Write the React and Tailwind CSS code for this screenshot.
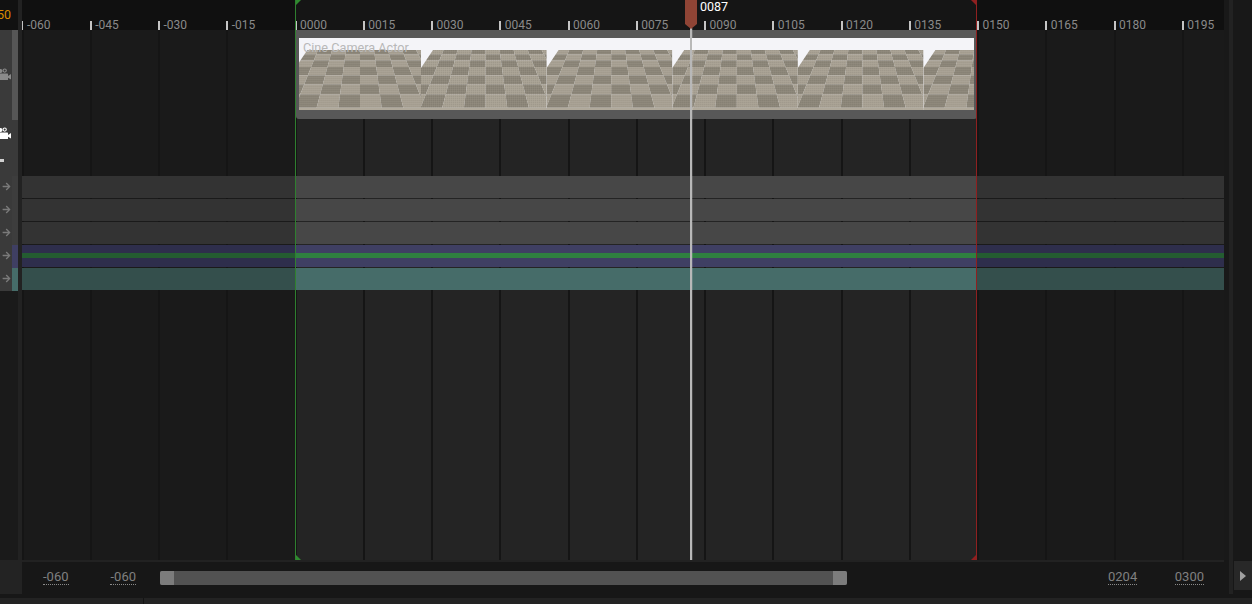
import { FaArrowRight } from 'react-icons/fa';

const rulerLabels = ['-060', '-045', '-030', '-015', '0000', '0015', '0030', '0045', '0060', '0075', '0090', '0105', '0120', '0135', '0150', '0165', '0180', '0195'];

// row edges of the floor, in strip coordinates (0 is the top of the thumbnail)
const floorRows = [12, 16.3, 22.3, 29, 37.3, 46.3, 56.3, 69.7, 72];
const spacingAt = y => 14 + ((y - 12) / 60) * 8;
const thumbOffsets = [-3.6, 122, 247.6, 373.2, 498.8, 624.4];

function floorQuads(cx) {
  const quads = [];
  for (let r = 0; r < floorRows.length - 1; r++) {
    const top = floorRows[r];
    const bottom = floorRows[r + 1];
    for (let c = -7; c < 7; c++) {
      const points = [
        [cx + c * spacingAt(top), top],
        [cx + (c + 1) * spacingAt(top), top],
        [cx + (c + 1) * spacingAt(bottom), bottom],
        [cx + c * spacingAt(bottom), bottom],
      ];
      quads.push({
        key: `${r}-${c}`,
        points: points.map(p => p.join(',')).join(' '),
        light: (r + c + 20) % 2 === 0,
      });
    }
  }
  return quads;
}

const quads = floorQuads(64.6);

function ThumbnailStrip() {
  return (
    <svg className="block" width="675" height="72" viewBox="0 0 675 72">
      <defs>
        <clipPath id="floor">
          <polygon points="12,12 125.6,12 125.6,72 0,72 0,30" />
        </clipPath>
        <pattern id="weave" width="2" height="2" patternUnits="userSpaceOnUse">
          <rect width="1" height="1" fill="#000" opacity="0.05" />
          <rect x="1" y="1" width="1" height="1" fill="#fff" opacity="0.04" />
        </pattern>
      </defs>
      <rect width="675" height="72" fill="#f4f4f8" />
      {thumbOffsets.map(x => (
        <g key={x} transform={`translate(${x} 0)`} clipPath="url(#floor)">
          <g className="blur-[0.4px]">
            {quads.map(q => (
              <polygon key={q.key} points={q.points} fill={q.light ? '#a8a193' : '#8c8679'} />
            ))}
          </g>
          <rect y="12" width="125.6" height="60" fill="url(#weave)" />
          <rect y="70" width="125.6" height="2" fill="#b0a99b" />
        </g>
      ))}
    </svg>
  );
}

function CameraIcon({ className }) {
  return (
    <svg className={className} width="12" height="13" viewBox="0 0 12 13" fill="currentColor">
      <circle cx="0.5" cy="3" r="2" />
      <circle cx="4.7" cy="2.6" r="1.6" fill="none" stroke="currentColor" strokeWidth="1.1" />
      <rect x="-1" y="5.5" width="9" height="6.5" rx="0.6" />
      <polygon points="8,8 11,6 11,11.6 8,9.8" />
    </svg>
  );
}

function TrackRow({ swatch }) {
  return (
    <div className="flex h-[23px]">
      <div className="flex w-[12px] items-center justify-center pb-[2px] text-[#7a7a7a]">
        <FaArrowRight size={9} />
      </div>
      <div className={`w-[6px] ${swatch}`} />
    </div>
  );
}

function Lane({ outer, inner, children }) {
  return (
    <div className="relative flex h-[22px] mb-px">
      <div className={`w-[274px] ${outer}`} />
      <div className={`w-[680px] ${inner}`} />
      <div className={`flex-1 ${outer}`} />
      {children}
    </div>
  );
}

function DottedValue({ children, className }) {
  return (
    <span className={`border-b border-dotted border-[#8a8a8a] text-[13px] leading-[15px] text-[#808080] ${className}`}>
      {children}
    </span>
  );
}

export default function App() {
  return (
    <div className="flex h-[604px] w-[1252px] flex-col overflow-hidden bg-[#181818] font-['Roboto',sans-serif]">
      <div className="flex h-[560px]">
        {/* track list, mostly cut off by the panel edge */}
        <div className="flex w-[22px] shrink-0 flex-col border-r-4 border-[#222222] bg-[#1a1a1a]">
          <div className="h-[30px] overflow-hidden bg-[#111111]">
            <span className="-ml-[3px] mt-[8px] block text-[12.5px] leading-[14px] text-[#d98a00]">50</span>
          </div>
          <div className="relative h-[146px] bg-[#3a3a3a]">
            <div className="absolute right-0 top-0 h-[90px] w-[6px] bg-[#565656]" />
            <CameraIcon className="absolute left-0 top-[38px] text-[#8a8a8a]" />
            <CameraIcon className="absolute left-0 top-[97px] text-white" />
            <div className="absolute left-0 top-[129px] h-[3px] w-[4px] bg-[#d0d0d0]" />
          </div>
          <div className="bg-[#3a3a3a]">
            <TrackRow swatch="bg-[#3d3d3d]" />
            <TrackRow swatch="bg-[#3d3d3d]" />
            <TrackRow swatch="bg-[#3d3d3d]" />
            <TrackRow swatch="bg-[#3f3f63]" />
            <TrackRow swatch="bg-[#466c69]" />
          </div>
        </div>

        {/* timeline */}
        <div className="relative w-[1202px] shrink-0 overflow-hidden">
          <div className="relative flex h-[30px] bg-[#101010]">
            <div className="absolute bottom-0 left-[274px] top-0 w-[680px] bg-white/[0.025]" />
            {rulerLabels.map((label, i) => (
              <div key={label} className="relative w-[68.25px] shrink-0 pl-[5px] pt-[18px] text-[12px] leading-[14px] text-[#8a8a8a]">
                <div className={`absolute bottom-0 h-[9px] bg-[#c4c4c4] ${i === 0 ? 'left-0 w-px' : 'left-[-0.5px] w-[2px]'}`} />
                {label}
              </div>
            ))}
          </div>

          <div className="relative h-[530px] bg-[#1a1a1a]">
            <div className="absolute bottom-0 left-[274px] top-0 w-[680px] bg-[#242424]" />
            <div className="absolute inset-0 -ml-[0.5px] flex">
              {rulerLabels.map(label => (
                <div key={label} className="w-[68.25px] shrink-0">
                  <div className="h-full w-[2px] bg-[#151515]" />
                </div>
              ))}
            </div>

            <div className="relative h-[146px] pl-[274px]">
              <div className="relative w-[681px] rounded-b-[3px] bg-[#585858] px-[3px] pb-[9px] pt-[8px]">
                <ThumbnailStrip />
                <span className="absolute left-[7px] top-[10px] text-[12.7px] leading-[15px] text-[#b8b8b8]">Cine Camera Actor</span>
              </div>
            </div>

            <div className="relative">
              <Lane outer="bg-[#333333]" inner="bg-[#474747]" />
              <Lane outer="bg-[#333333]" inner="bg-[#474747]" />
              <Lane outer="bg-[#333333]" inner="bg-[#474747]" />
              <Lane outer="bg-[#2e2e4c]" inner="bg-[#3f3f63]">
                <div className="absolute inset-x-0 top-[8px] flex h-[5px]">
                  <div className="w-[274px] bg-[#245c31]" />
                  <div className="w-[680px] bg-[#2f8040]" />
                  <div className="flex-1 bg-[#245c31]" />
                </div>
              </Lane>
              <Lane outer="bg-[#344f4c]" inner="bg-[#466c69]" />
            </div>
          </div>

          {/* range markers and playhead sit over the tracks */}
          <div className="absolute bottom-0 left-[273px] top-0 w-px bg-[#2f7f2f]" />
          <div className="absolute left-[274px] top-0 size-0 border-r-[5px] border-t-[5px] border-r-transparent border-t-[#2f8a2f]" />
          <div className="absolute bottom-0 left-[274px] size-0 border-b-[5px] border-r-[5px] border-b-[#2f8a2f] border-r-transparent" />
          <div className="absolute bottom-0 left-[954px] top-0 w-px bg-[#8f2020]" />
          <div className="absolute left-[949px] top-0 size-0 border-l-[5px] border-t-[5px] border-l-transparent border-t-[#8f2020]" />
          <div className="absolute bottom-0 left-[949px] size-0 border-b-[5px] border-l-[5px] border-b-[#8f2020] border-l-transparent" />

          <div className="absolute bottom-0 left-[668px] top-[28px] w-[3px] border-r border-white/15 bg-[#b8b8b8] bg-clip-padding" />
          <svg className="absolute left-[663px] top-0" width="12" height="29" viewBox="0 0 12 29">
            <polygon points="0,0 12,0 12,24 6,29 0,24" fill="#8f4435" />
          </svg>
          <span className="absolute left-[678px] top-0 text-[12.5px] leading-[14px] text-white">0087</span>
        </div>

        <div className="flex flex-1">
          <div className="w-[5px] bg-[#191919]" />
          <div className="w-[4px] bg-[#222222]" />
          <div className="flex-1 bg-[#181818]" />
        </div>
      </div>

      {/* range and zoom bar */}
      <div className="flex h-[38px] bg-[#171717]">
        <div className="h-[34px] w-[22px] shrink-0 bg-[#232323]" />
        <div className="w-[1202px] shrink-0">
          <div className="h-[2px] bg-[#222222]" />
          <div className="flex h-[36px] items-start">
            <div className="ml-[21px] mt-[7px] flex w-[93px] justify-between">
              <DottedValue>-060</DottedValue>
              <DottedValue>-060</DottedValue>
            </div>
            <div className="ml-[24px] mt-[9px] flex h-[14px] w-[687px] justify-between rounded-[2px] bg-[#525252]">
              <div className="w-[14px] rounded-l-[2px] bg-[#7c7c7c]" />
              <div className="w-[14px] rounded-r-[2px] bg-[#7c7c7c]" />
            </div>
            <div className="ml-[261px] mt-[7px] flex w-[96px] justify-between">
              <DottedValue>0204</DottedValue>
              <DottedValue>0300</DottedValue>
            </div>
          </div>
        </div>
        <div className="flex flex-1">
          <div className="w-[5px]" />
          <div className="h-[34px] w-[4px] bg-[#222222]" />
          <div className="flex-1 pl-px pt-px">
            <div className="flex h-[29px] items-center justify-center bg-[#282828]">
              <div className="size-0 border-y-[5px] border-l-[6px] border-y-transparent border-l-[#a0a0a0]" />
            </div>
          </div>
        </div>
      </div>

      <div className="flex flex-1 bg-[#232323]">
        <div className="w-[143px] shrink-0" />
        <div className="w-px bg-[#141414]" />
      </div>
    </div>
  );
}
